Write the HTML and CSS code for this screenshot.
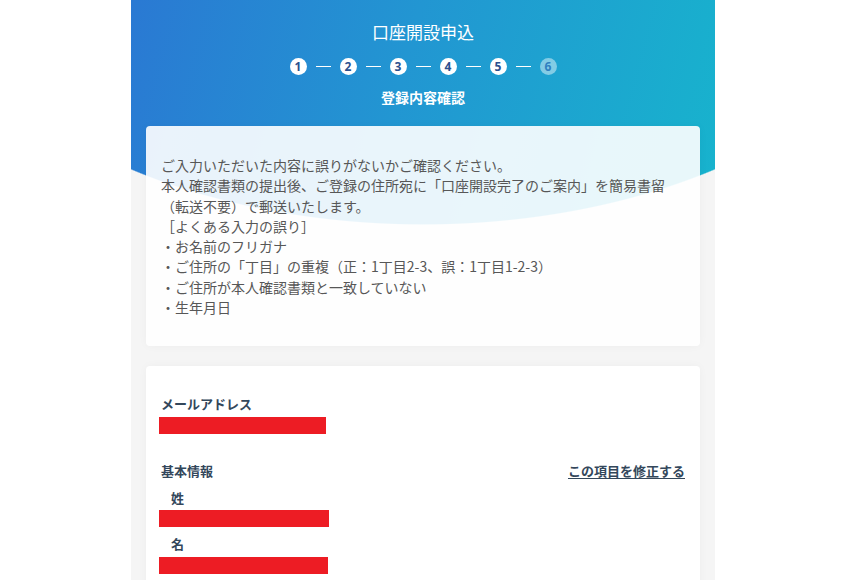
FILE: index.html
```html
<!DOCTYPE html>
<html lang="ja">
<head>
<meta charset="utf-8">
<title>口座開設申込</title>
<link rel="stylesheet" href="styles.css">
</head>
<body>
<div class="page">
  <div class="column">
    <header class="hero">
      <h1 class="hero-title">口座開設申込</h1>
      <ol class="steps">
        <li class="step">1</li><li class="dash"></li>
        <li class="step">2</li><li class="dash"></li>
        <li class="step">3</li><li class="dash"></li>
        <li class="step">4</li><li class="dash"></li>
        <li class="step">5</li><li class="dash"></li>
        <li class="step current">6</li>
      </ol>
      <p class="hero-sub">登録内容確認</p>
    </header>

    <section class="card notice">
      <p>ご入力いただいた内容に誤りがないかご確認ください。<br>本人確認書類の提出後、ご登録の住所宛に「口座開設完了のご案内」を簡易書留<br>（転送不要）で郵送いたします。<br>［よくある入力の誤り］<br>・お名前のフリガナ<br>・ご住所の「丁目」の重複（正：1丁目2-3、誤：1丁目1-2-3）<br>・ご住所が本人確認書類と一致していない<br>・生年月日</p>
    </section>

    <section class="card details">
      <div class="field-label">メールアドレス</div>
      <div class="redact w167"></div>

      <div class="group-head">
        <span class="group-title">基本情報</span>
        <a class="edit-link" href="#">この項目を修正する</a>
      </div>
      <div class="sub-label">姓</div>
      <div class="redact w170"></div>
      <div class="sub-label">名</div>
      <div class="redact w169"></div>
    </section>
  </div>
</div>
</body>
</html>
```

FILE: styles.css
```css
html, body {
  margin: 0;
  padding: 0;
  background: #ffffff;
  font-family: "Noto Sans CJK JP", "Noto Sans", sans-serif;
}

.page {
  width: 846px;
}

.column {
  width: 584px;
  margin: 0 auto;
  min-height: 580px;
  padding: 21px 15px 0;
  box-sizing: border-box;
  background:
    radial-gradient(500px 292px at 50% -67px, transparent 99.6%, #f5f5f5 100%) 0 0 / 100% 240px no-repeat,
    linear-gradient(105deg, #2a79d3 0%, #2296d2 45%, #17b4cd 100%) 0 0 / 100% 240px no-repeat,
    #f5f5f5;
}

.hero {
  text-align: center;
  color: #ffffff;
}

.hero-title {
  margin: 0;
  font-size: 17px;
  line-height: 22px;
  font-weight: 400;
}

.steps {
  list-style: none;
  margin: 15px 0 0;
  padding: 0;
  display: flex;
  justify-content: center;
  align-items: center;
  gap: 9px;
}

.step {
  width: 17px;
  height: 17px;
  border-radius: 50%;
  background: #ffffff;
  color: #2c4f8e;
  font-family: "Open Sans", "Roboto", sans-serif;
  font-weight: 700;
  font-size: 12px;
  line-height: 17px;
  text-align: center;
}

.step.current {
  background: rgba(255, 255, 255, 0.45);
  color: #2f7fc0;
}

.dash {
  width: 15px;
  height: 1px;
  background: #ffffff;
}

.hero-sub {
  margin: 12px 0 0;
  font-size: 14px;
  line-height: 20px;
  font-weight: 700;
}

.card {
  background: rgba(255, 255, 255, 0.9);
  border-radius: 4px;
  box-shadow: 0 0 10px rgba(0, 0, 0, 0.035);
}

.notice {
  margin-top: 19px;
  padding: 29px 15px;
}

.notice p {
  margin: 0;
  font-size: 14px;
  line-height: 20.3px;
  color: #575757;
}

.details {
  margin-top: 20px;
  padding: 28px 15px 40px;
  background: #ffffff;
  color: #33475b;
}

.field-label {
  font-size: 13px;
  line-height: 20px;
  font-weight: 700;
}

.redact {
  height: 17px;
  margin: 3px 0 0 -2px;
  background: #ed1c24;
}

.w167 { width: 167px; }
.w170 { width: 170px; margin-top: 2px; }
.w169 { width: 169px; margin-top: 3px; }

.group-head {
  margin-top: 27px;
  display: flex;
  justify-content: space-between;
  align-items: center;
  font-size: 13px;
  line-height: 20px;
  font-weight: 700;
}

.edit-link {
  color: #33475b;
  text-decoration: underline;
  text-underline-offset: 2px;
}

.sub-label {
  margin-top: 7px;
  padding-left: 10px;
  font-size: 13px;
  line-height: 20px;
  font-weight: 700;
}
```
